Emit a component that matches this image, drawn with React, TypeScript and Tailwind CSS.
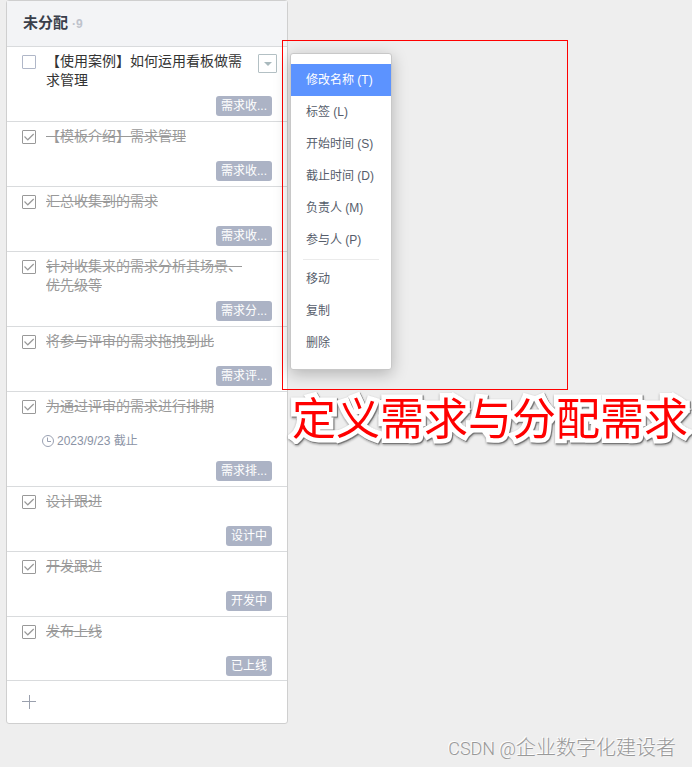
import React from 'react';
import { clsx } from 'clsx';

type Task = {
  id: string;
  title: string;
  tag: string;
  done: boolean;
  due?: string;
};

const tasks: Task[] = [
  { id: 'case', title: '【使用案例】如何运用看板做需求管理', tag: '需求收...', done: false },
  { id: 'template', title: '【模板介绍】需求管理', tag: '需求收...', done: true },
  { id: 'collect', title: '汇总收集到的需求', tag: '需求收...', done: true },
  { id: 'analyse', title: '针对收集来的需求分析其场景、优先级等', tag: '需求分...', done: true },
  { id: 'review', title: '将参与评审的需求拖拽到此', tag: '需求评...', done: true },
  { id: 'schedule', title: '为通过评审的需求进行排期', tag: '需求排...', done: true, due: '2023/9/23 截止' },
  { id: 'design', title: '设计跟进', tag: '设计中', done: true },
  { id: 'develop', title: '开发跟进', tag: '开发中', done: true },
  { id: 'release', title: '发布上线', tag: '已上线', done: true },
];

const editActions = ['修改名称 (T)', '标签 (L)', '开始时间 (S)', '截止时间 (D)', '负责人 (M)', '参与人 (P)'];
const cardActions = ['移动', '复制', '删除'];

const ClockIcon = () => (
  <svg className="size-3" viewBox="0 0 12 12" fill="none" stroke="#9aa1b2">
    <circle cx="6" cy="6" r="5.5" />
    <path d="M5.5 2.5v4h3.5" />
  </svg>
);

const TaskCard: React.FC<{ task: Task }> = ({ task }) => (
  <li className="flex min-h-[65px] flex-col gap-[6px] border-b border-[#d9dbdd] py-[5px] pr-[10px] pl-[15px] last:min-h-16 last:pb-1">
    <div className="flex items-start">
      <span className="relative mt-[3px] mr-[10px] size-[14px] shrink-0">
        <input
          id={task.id}
          type="checkbox"
          defaultChecked={task.done}
          className="peer block size-[14px] appearance-none rounded-[1px] border border-[#b0b7c8] checked:border-[#999]"
        />
        <svg
          className="pointer-events-none absolute inset-0 hidden size-[14px] peer-checked:block"
          viewBox="0 0 14 14"
          fill="none"
          stroke="#999"
          strokeWidth="1.2"
        >
          <path d="M2.5 6.5l3.3 3.3L11.7 4" />
        </svg>
      </span>
      <label
        htmlFor={task.id}
        className={clsx('w-[196px] text-sm leading-[19px]', task.done ? 'text-[#999] line-through' : 'text-[#333]')}
      >
        {task.title}
      </label>
      {!task.done && (
        <button
          type="button"
          aria-label="更多操作"
          className="mt-[2px] ml-auto flex size-[19px] items-center justify-center rounded-[1px] border border-[#b3c0c4]"
        >
          <svg className="h-1 w-2" viewBox="0 0 8 4" fill="#a9b9bd">
            <path d="M0 0h8L4 4z" />
          </svg>
        </button>
      )}
    </div>
    {task.due && (
      <p className="mt-[9px] mb-1 ml-5 flex items-center gap-[3px] text-xs leading-5 text-[#8b93a5]">
        <ClockIcon />
        {task.due}
      </p>
    )}
    <span className="mt-auto mr-[5px] self-end rounded-[3px] bg-[#acb3c5] px-[5px] text-xs leading-5 text-white">
      {task.tag}
    </span>
  </li>
);

const MenuItem: React.FC<{ label: string; active?: boolean }> = ({ label, active }) => (
  <button
    type="button"
    role="menuitem"
    className={clsx(
      'block h-8 w-full px-[15px] text-left text-xs whitespace-nowrap',
      active ? 'bg-[#5c93ff] text-white' : 'text-[#565d6b]'
    )}
  >
    {label}
  </button>
);

const ContextMenu = () => (
  <div
    role="menu"
    className="w-[102px] rounded-[3px] border border-[#c8c8c8] bg-white py-[10px] shadow-[0_4px_16px_rgba(0,0,0,0.25)]"
  >
    {editActions.map((label, index) => (
      <MenuItem key={label} label={label} active={index === 0} />
    ))}
    <hr className="mx-3 my-[3px] border-[#ebebeb]" />
    {cardActions.map((label) => (
      <MenuItem key={label} label={label} />
    ))}
  </div>
);

const App: React.FC = () => {
  return (
    <main className="relative min-h-screen overflow-x-hidden bg-[#eee] font-['Liberation_Sans','Noto_Sans_CJK_SC',sans-serif]">
      <section className="ml-[6px] w-[282px] rounded-[3px] border border-[#cfcfcf] bg-white">
        <header className="flex h-[46px] items-center gap-1 border-b border-[#d9dbdd] bg-[#f3f4f6] pl-4">
          <h2 className="text-[15px] font-bold text-[#3a3f4a]">未分配</h2>
          <span className="text-xs font-bold text-[#bfc3cc]">·9</span>
        </header>
        <ul>
          {tasks.map((task) => (
            <TaskCard key={task.id} task={task} />
          ))}
        </ul>
        <button type="button" aria-label="添加任务" className="flex h-[42px] w-full items-center pl-[15px]">
          <svg className="size-[14px]" viewBox="0 0 14 14" stroke="#9aa0ad" strokeWidth="1">
            <path d="M7.5 0v14M0 6.5h14" />
          </svg>
        </button>
      </section>

      {/* Annotation over the board */}
      <div className="absolute top-10 left-[282px]">
        <div className="w-[286px] border border-[#f00] pt-3 pb-[19px] pl-[7px]">
          <ContextMenu />
        </div>
        <p className="ml-[10px] text-[44px] leading-[60px] whitespace-nowrap text-[#f00] [filter:drop-shadow(1px_1px_0_#777)_drop-shadow(0_1px_1px_#999)] [paint-order:stroke_fill] [stroke-linejoin:round] [-webkit-text-stroke:9px_white]">
          定义需求与分配需求
        </p>
      </div>

      <footer className="mt-3 pr-4 text-right text-xl leading-6 font-light text-[#999] [text-shadow:-1px_-1px_0_#fff]">
        <span className="font-[Roboto] text-lg leading-6">CSDN @</span>
        企业数字化建设者
      </footer>
    </main>
  );
};

export default App;
